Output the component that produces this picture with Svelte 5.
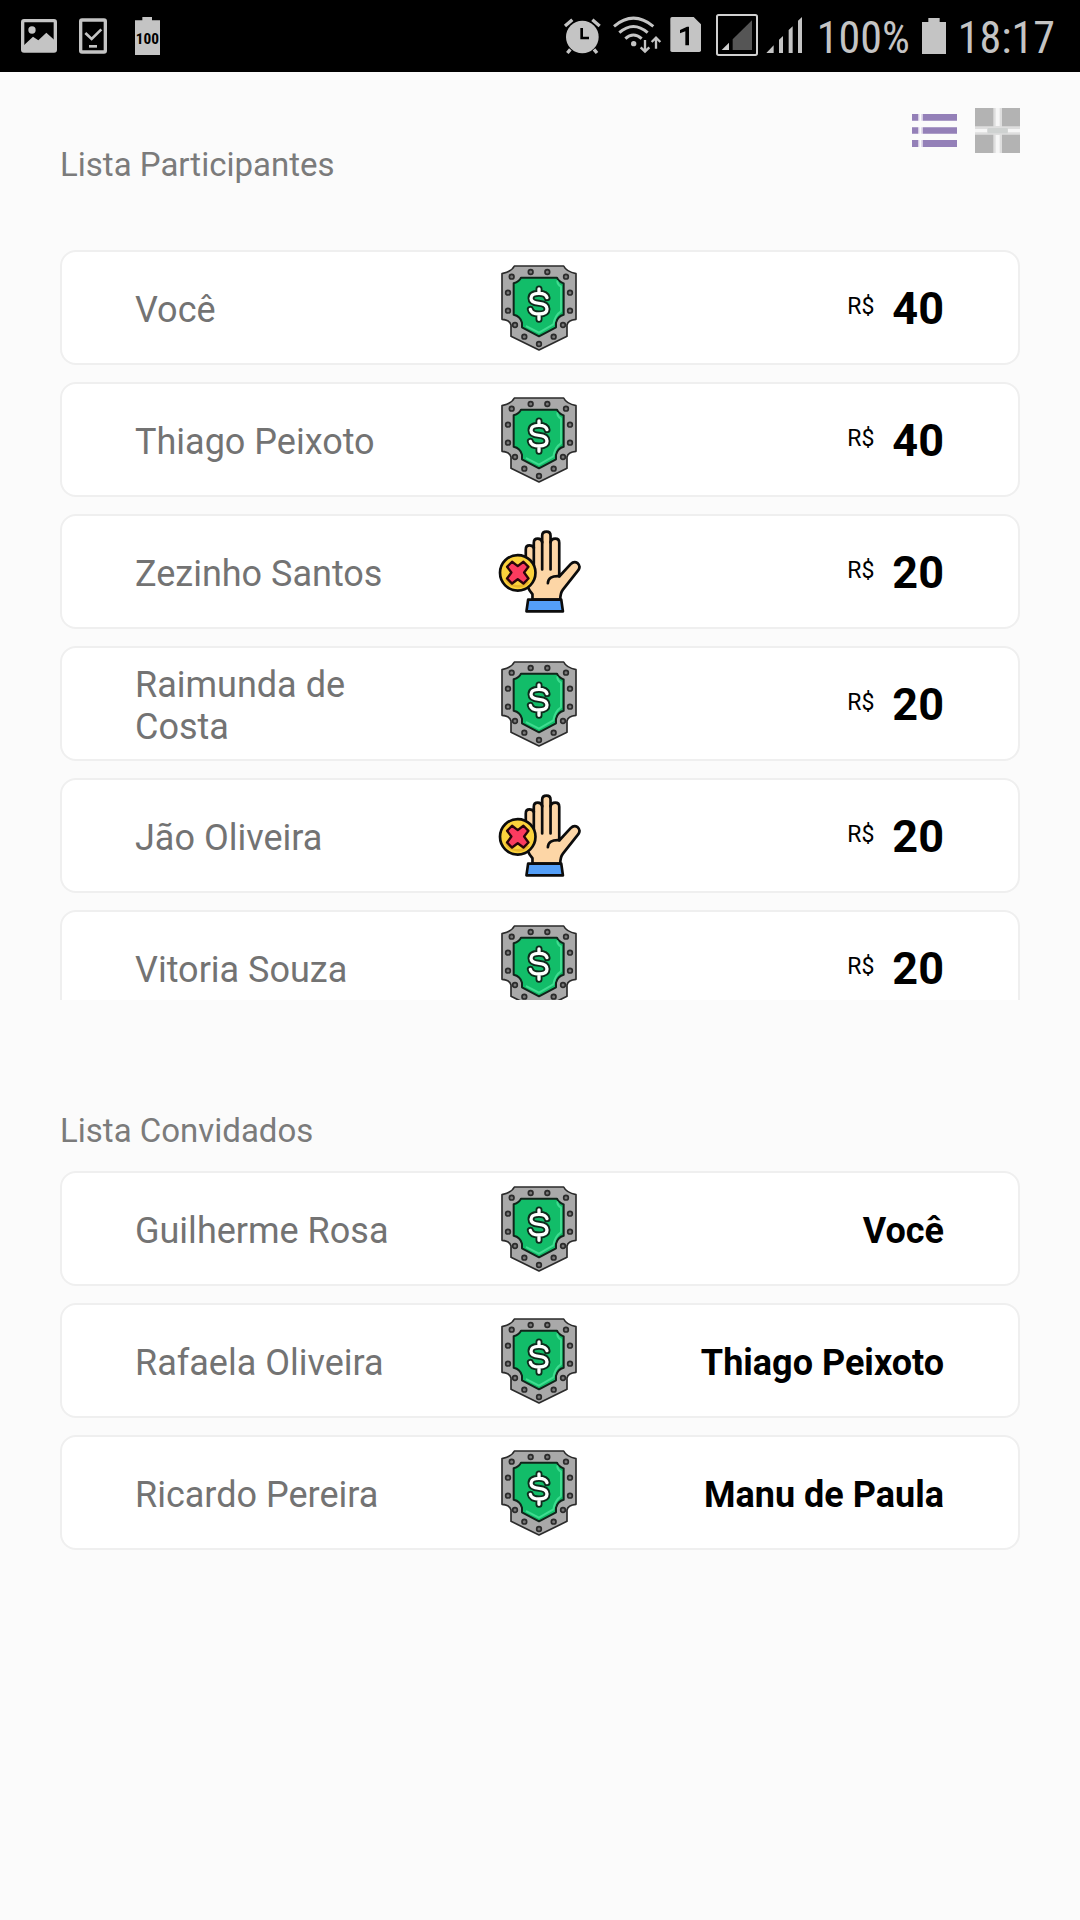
<script>
  const participants = [
    { name: 'Você', paid: true, amount: 40 },
    { name: 'Thiago Peixoto', paid: true, amount: 40 },
    { name: 'Zezinho Santos', paid: false, amount: 20 },
    { name: 'Raimunda de Costa', paid: true, amount: 20 },
    { name: 'Jão Oliveira', paid: false, amount: 20 },
    { name: 'Vitoria Souza', paid: true, amount: 20 },
  ];

  const guests = [
    { name: 'Guilherme Rosa', host: 'Você' },
    { name: 'Rafaela Oliveira', host: 'Thiago Peixoto' },
    { name: 'Ricardo Pereira', host: 'Manu de Paula' },
  ];

  // Centres of the rivets along the shield's rim.
  const rivets = [
    [155, 94], [205, 94], [98, 108], [261, 108], [87, 156], [273, 156], [87, 210],
    [273, 210], [108, 253], [252, 253], [136, 288], [224, 288], [180, 310],
  ];

  let view = $state('list');
</script>

{#snippet shield()}
  <svg class="shield" viewBox="66 70 228 262" role="img" aria-label="Pago">
    <path d="M106 76H254Q262 93 291 99V236Q267 238 264 253V287L180 328L96 287V253Q93 238 69 236V99Q98 93 106 76Z" fill="#a9a9a9" stroke="#2b2b2b" stroke-width="5" stroke-linejoin="round" />
    {#each rivets as [cx, cy]}
      <circle {cx} {cy} r="7" fill="#777" stroke="#2b2b2b" stroke-width="5" />
    {/each}
    <path d="M126 111H234Q239 123 254 128V222Q236 226 231 246V260L180 287L129 260V246Q124 226 104 222V128Q121 123 126 111Z" fill="#12bd69" stroke="#10241a" stroke-width="6" stroke-linejoin="round" />
    <path d="M235 122Q236 133 246 137V212Q229 222 223 251L180 276L143 257" fill="none" stroke="#3fdc90" stroke-width="6" stroke-linejoin="round" stroke-linecap="round" />
    <g fill="none" stroke-linecap="round" stroke-linejoin="round">
      <path class="coin-outline" d="M180 145V158M180 220V236M204 171Q201 158 180 158Q156 158 156 173Q156 187 180 188Q204 190 204 205Q204 220 180 220Q157 220 154 206" />
      <path class="coin-line" d="M180 145V158M180 220V236M204 171Q201 158 180 158Q156 158 156 173Q156 187 180 188Q204 190 204 205Q204 220 180 220Q157 220 154 206" />
    </g>
  </svg>
{/snippet}

{#snippet hand()}
  <svg class="hand" viewBox="56 60 248 248" role="img" aria-label="Não pago">
    <g stroke="#0c0c0c" stroke-width="8" stroke-linejoin="round" stroke-linecap="round">
      <path d="M159 268V252Q139 230 139 200V118Q139 106 150 106Q160 106 163 114V98Q163 86 175 86Q186 86 188 97V77Q188 65 201 65Q213 65 213 77V97Q215 86 227 86Q239 86 239 98V199L273 162Q283 152 294 159Q304 168 296 180L250 238Q242 248 242 268Z" fill="#fdd6a6" />
      <path d="M163 112V180M188 95V178M213 95V178M239 198Q206 196 205 219" fill="none" />
      <path d="M146 268H245L250 303H141Z" fill="#549ff8" />
      <circle cx="115" cy="188" r="53" fill="#fbd23c" />
    </g>
    <path d="M80 207A40 40 0 0 0 146 214" fill="none" stroke="#e9b52b" stroke-width="8" />
    <path d="M98 155L115 168L132 155L147 170L134 187L147 205L132 220L115 207L98 220L83 205L96 187L83 170Z" fill="#fb3b5f" stroke="#29040b" stroke-width="7" stroke-linejoin="round" />
  </svg>
{/snippet}

<div class="screen">
  <div class="status">
    <div class="notices">
      <svg width="36" height="42" viewBox="63 45 108 126" aria-hidden="true">
        <rect x="68" y="62" width="98" height="91" rx="4" fill="none" stroke="#c4c4c4" stroke-width="10" />
        <circle cx="96" cy="90" r="11" fill="#c4c4c4" />
        <path d="M70 137L99 110L115 121L139 98L164 121V154H70Z" fill="#c4c4c4" />
      </svg>
      <svg width="36" height="42" viewBox="225 45 108 126" aria-hidden="true">
        <rect x="242" y="60" width="74" height="96" rx="4" fill="none" stroke="#c4c4c4" stroke-width="10" />
        <path d="M256 99L275 117L304 88" fill="none" stroke="#c4c4c4" stroke-width="8" />
        <path d="M267 139H291" stroke="#c4c4c4" stroke-width="8" />
      </svg>
      <svg width="36" height="42" viewBox="387 45 108 126" aria-hidden="true">
        <path d="M405 61H427V51H456V61H480V165H405Z" fill="#c4c4c4" />
        <text class="battery-text" x="442" y="131">100</text>
      </svg>
    </div>
    <div class="system">
      <svg width="42" height="42" viewBox="36 45 126 126" aria-hidden="true">
        <circle cx="97" cy="111" r="49" fill="#c4c4c4" />
        <path d="M45 78L67 59M149 78L127 59" stroke="#c4c4c4" stroke-width="10" />
        <path d="M61 148L52 159M132 148L141 159" stroke="#c4c4c4" stroke-width="10" />
        <path d="M95 84V114H117" fill="none" stroke="#000" stroke-width="8" />
      </svg>
      <svg width="50" height="42" viewBox="188 45 150 126" aria-hidden="true">
        <g fill="none" stroke="#c4c4c4">
          <path d="M194 79Q252 30 312 79" stroke-width="9" />
          <path d="M210 98Q252 61 295 98" stroke-width="9" />
          <path d="M228 116Q252 94 277 116" stroke-width="9" />
          <path d="M287 120V154M274 142L287 155L300 142M320 146V114M307 126L320 113L333 126" stroke-width="7" />
        </g>
        <circle cx="253" cy="131" r="8" fill="#c4c4c4" />
      </svg>
      <svg width="32" height="42" viewBox="356 45 96 126" aria-hidden="true">
        <path d="M362 51H427L449 73V151Q449 156 444 156H362Q357 156 357 151V56Q357 51 362 51Z" fill="#c4c4c4" />
        <path d="M386 90L407 80H413V136H402V94L386 100Z" fill="#000" />
      </svg>
      <svg width="48" height="42" viewBox="480 45 144 126" overflow="visible" aria-hidden="true">
        <rect x="501" y="45" width="120" height="120" rx="5" fill="none" stroke="#d0d0d0" stroke-width="6" />
        <path d="M548 118L606 61V150H548Z" fill="#555" />
        <path d="M515 150L537 128V150Z" fill="#d0d0d0" />
      </svg>
      <svg width="40" height="42" viewBox="645 45 120 126" aria-hidden="true">
        <path d="M646 159L668 136V159ZM684 119L696 108V159H684ZM713 90L725 79V159H713ZM741 62L753 51V159H741Z" fill="#c4c4c4" />
      </svg>
      <span class="status-text">100%</span>
      <svg width="26" height="42" viewBox="360 45 78 126" aria-hidden="true">
        <path d="M363 66H382V54H416V66H435V162H363Z" fill="#c4c4c4" />
      </svg>
      <time class="status-text">18:17</time>
    </div>
  </div>

  <main>
    <header>
      <h1>Lista Participantes</h1>
      <div class="views">
        <button type="button" aria-label="Ver em lista" aria-pressed={view === 'list'} onclick={() => (view = 'list')}>
          <svg width="45" height="45" viewBox="0 0 135 135" aria-hidden="true">
            <path d="M0 18H18V38H0ZM33 18H135V38H33ZM0 58H18V77H0ZM33 58H135V77H33ZM0 96H18V117H0ZM33 96H135V117H33Z" fill="#9480b8" />
            <path d="M18 18H22V38H18ZM28 18H33V38H28ZM18 58H22V77H18ZM28 58H33V77H28ZM18 96H22V117H18ZM28 96H33V117H28Z" fill="#d5cce4" />
          </svg>
        </button>
        <button type="button" aria-label="Ver em grade" aria-pressed={view === 'grid'} onclick={() => (view = 'grid')}>
          <svg width="45" height="45" viewBox="0 0 135 135" aria-hidden="true">
            <path d="M0 0H135V135H0Z" fill="#dedede" />
            <path d="M0 0H55V55H0ZM81 0H135V55H81ZM0 80H55V135H0ZM81 80H135V135H81Z" fill="#b3b3b3" />
            <path d="M62 0H74V54H62ZM62 81H74V135H62ZM0 63H36V73H0ZM99 63H135V73H99Z" fill="#f6f6f6" />
            <path d="M38 60H98V76H38Z" fill="#cfd2d1" />
          </svg>
        </button>
      </div>
    </header>

    <ul class="list scroll">
      {#each participants as person}
        <li class="card">
          <span class="name">{person.name}</span>
          {#if person.paid}{@render shield()}{:else}{@render hand()}{/if}
          <span class="amount"><small>R$</small><b>{person.amount}</b></span>
        </li>
      {/each}
    </ul>

    <h2>Lista Convidados</h2>
    <ul class="list">
      {#each guests as guest}
        <li class="card">
          <span class="name">{guest.name}</span>
          {@render shield()}
          <b class="host">{guest.host}</b>
        </li>
      {/each}
    </ul>
  </main>
</div>

<style>
  :global(body) {
    background: #fbfbfb;
  }

  .screen {
    min-height: 100vh;
    background: #fbfbfb;
    font-family: Roboto, 'Liberation Sans', sans-serif;
    color: #000;
  }

  svg {
    display: block;
    flex: none;
  }

  .status {
    display: flex;
    justify-content: space-between;
    align-items: center;
    height: 72px;
    padding: 0 22px 0 21px;
    background: #000;
    color: #c4c4c4;
  }

  .notices {
    display: flex;
    gap: 18px;
  }

  .system {
    display: flex;
    align-items: center;
    gap: 8px;
  }

  .status-text {
    padding: 3px 3px 0;
    font-family: 'Roboto Condensed', 'Liberation Sans Narrow', Roboto, sans-serif;
    font-size: 44px;
    line-height: 52px;
  }

  .battery-text {
    font-family: 'Roboto Condensed', Roboto, sans-serif;
    font-size: 46px;
    font-weight: 700;
    text-anchor: middle;
    fill: #000;
  }

  main {
    padding: 36px 60px;
  }

  header {
    display: flex;
    justify-content: space-between;
    align-items: flex-start;
  }

  h1,
  h2 {
    margin: 0;
    font-size: 33px;
    font-weight: 400;
    line-height: 40px;
    color: #7b7b7b;
  }

  h1 {
    padding-top: 37px;
  }

  h2 {
    margin-top: 111px;
  }

  .views {
    display: flex;
    gap: 18px;
  }

  button {
    padding: 0;
    border: 0;
    background: none;
  }

  .list {
    display: flex;
    flex-direction: column;
    gap: 17px;
    margin: 20px 0 0;
    padding: 0;
    list-style: none;
  }

  .scroll {
    max-height: 750px;
    margin-top: 65px;
    overflow-y: auto;
    scrollbar-width: none;
  }

  .card {
    display: grid;
    grid-template-columns: repeat(3, 1fr);
    align-items: center;
    flex: none;
    box-sizing: border-box;
    min-height: 115px;
    padding: 0 74px 0 73px;
    border: 2px solid #efefef;
    border-radius: 16px;
    background: #fff;
  }

  .name {
    padding-top: 4px;
    font-size: 36px;
    line-height: 42px;
    color: #737373;
  }

  .shield {
    width: 76px;
    justify-self: center;
  }

  .hand {
    width: 83px;
    justify-self: center;
  }

  .coin-outline {
    stroke: #0e2b1c;
    stroke-width: 21;
  }

  .coin-line {
    stroke: #fff;
    stroke-width: 10;
  }

  .amount {
    display: flex;
    justify-content: flex-end;
    align-items: center;
    gap: 18px;
    padding-top: 3px;
  }

  .amount small {
    font-size: 23px;
    line-height: 24px;
    padding-bottom: 4px;
  }

  .amount b {
    font-size: 45px;
    line-height: 52px;
  }

  .host {
    padding-top: 4px;
    font-size: 36px;
    line-height: 42px;
    text-align: right;
    white-space: nowrap;
  }
</style>
